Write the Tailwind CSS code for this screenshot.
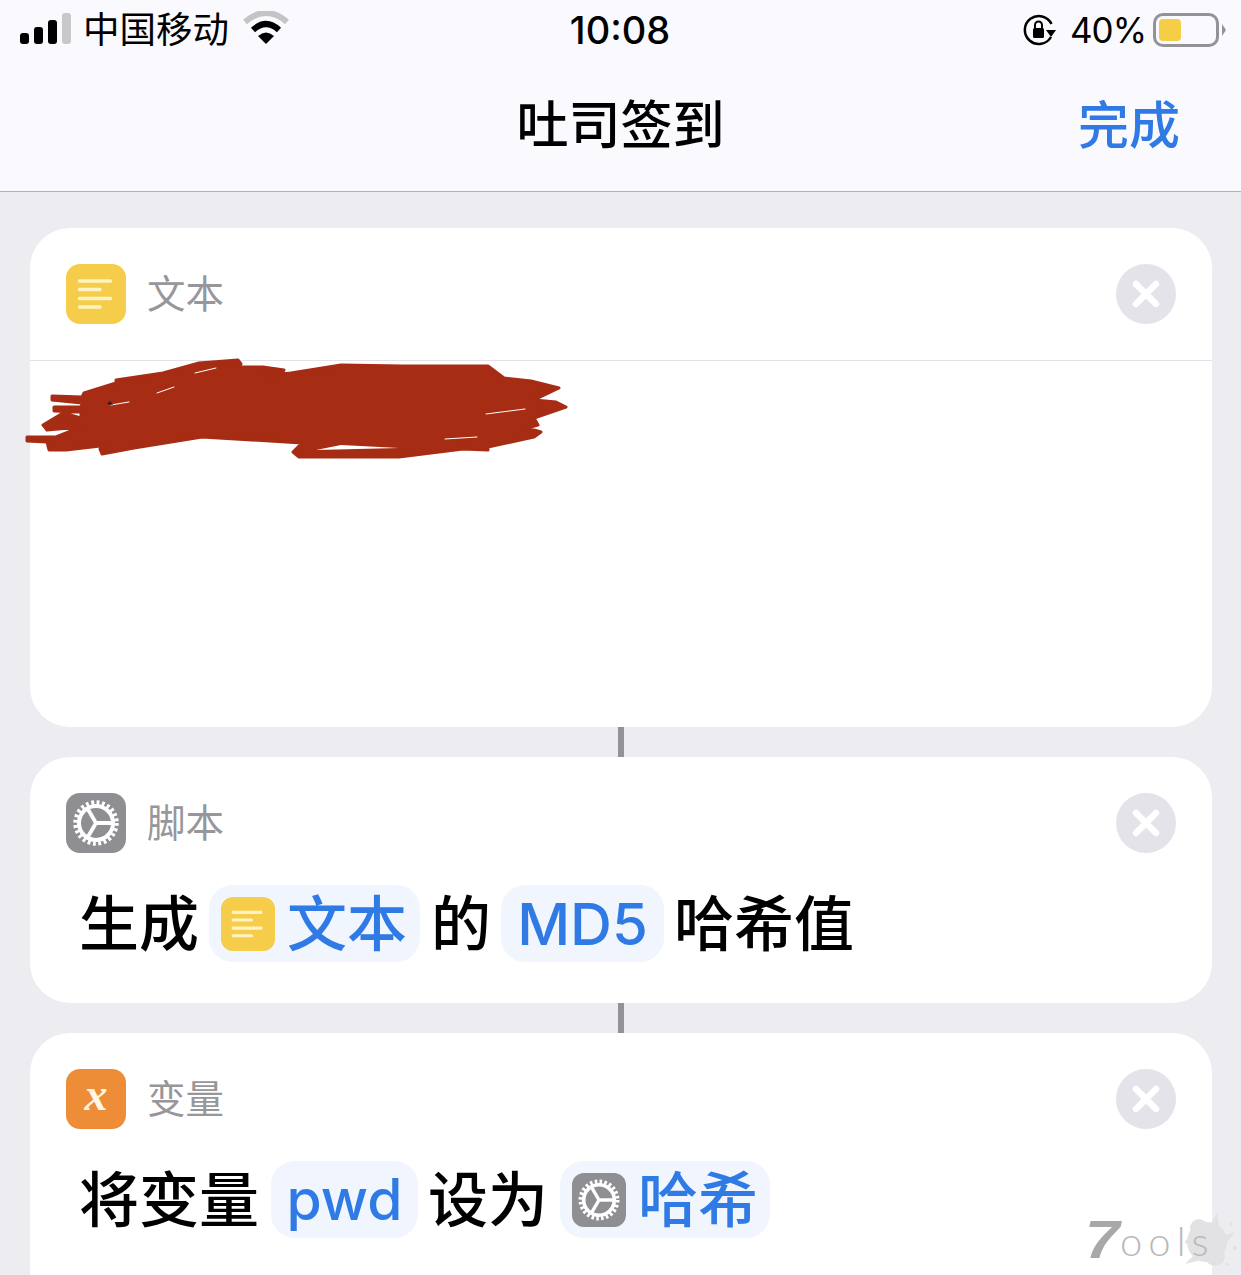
<!DOCTYPE html>
<html lang="zh-CN">
<head>
  <meta charset="UTF-8" />
  <title>吐司签到</title>
  <script src="https://cdn.jsdelivr.net/npm/@tailwindcss/browser@4"></script>
</head>
<body class="bg-[#ececf1] font-['Inter','Noto_Sans_CJK_SC',sans-serif]">
<svg class="hidden">
  <symbol id="gear" viewBox="0 0 60 60">
    <circle cx="30" cy="30" r="20.500" fill="none" stroke="#fff" stroke-width="4.500" stroke-dasharray="2.850 2.516"/>
    <circle cx="30" cy="30" r="17" fill="none" stroke="#fff" stroke-width="4"/>
    <path d="M30 30 L46 30 M30 30 L21.500 15.500 M30 30 L21.500 44.500" fill="none" stroke="#fff" stroke-width="3.800"/>
  </symbol>
  <symbol id="lines" viewBox="0 0 60 60">
    <path d="M13.500 17H44.500 M13.500 25.500H34 M13.500 34.500H44.500 M13.500 43H34" fill="none" stroke="#fff3c4" stroke-width="3.500" stroke-linecap="round"/>
  </symbol>
  <symbol id="close" viewBox="0 0 60 60">
    <circle cx="30" cy="30" r="30" fill="#e3e3e9"/>
    <path d="M20 20 L40 40 M40 20 L20 40" stroke="#fff" stroke-width="6.500" stroke-linecap="round"/>
  </symbol>
</svg>

<div class="relative h-[1275px] overflow-hidden">
  <header class="h-[192px] bg-[#fafafe] border-b border-[#b2b2b5]">
    <div class="h-[60px] flex items-center justify-between pl-[20px] pr-[15px] text-black">
      <div class="flex items-center w-[300px]">
        <svg width="51" height="32" viewBox="0 0 51 32" class="mt-[-2px]">
          <rect x="0" y="20" width="9" height="11" rx="3" fill="#000"/>
          <rect x="14" y="14" width="9" height="17" rx="3" fill="#000"/>
          <rect x="28" y="7" width="9" height="24" rx="3" fill="#000"/>
          <rect x="42" y="0" width="9" height="31" rx="3" fill="#c8c8ca"/>
        </svg>
        <span class="ml-[12px] text-[36.500px] leading-none">中国移动</span>
        <svg width="46" height="34" viewBox="0 0 46 34" class="ml-[14px] mt-[-4px]">
          <path d="M2 11 Q23 -7 44 11" fill="none" stroke="#c4c4c6" stroke-width="6"/>
          <path d="M10 19 Q23 7 36 19" fill="none" stroke="#000" stroke-width="6"/>
          <path d="M15 25 L23 33 L31 25 Q23 18 15 25Z" fill="#000"/>
        </svg>
      </div>
      <div class="text-[38px] font-medium leading-none">10:08</div>
      <div class="flex items-center justify-end w-[306px]">
        <svg width="34" height="32" viewBox="0 0 34 32">
          <path d="M28 23 A14 14 0 1 1 28.500 10" fill="none" stroke="#000" stroke-width="2.500"/>
          <path d="M23 16 H33 L28 23Z" fill="#000"/>
          <rect x="10" y="14" width="11" height="10" rx="1.500" fill="#000"/>
          <path d="M12 15 V11 A3.500 3.500 0 0 1 19 11 V15" fill="none" stroke="#000" stroke-width="2"/>
        </svg>
        <span class="ml-[13px] text-[35px] tracking-[-1px] leading-none">40%</span>
        <div class="ml-[7px] w-[66px] h-[34px] rounded-[10px] border-[3px] border-[#929297] p-[3px]">
          <div class="w-[22px] h-full rounded-[4px] bg-[#f5cd47]"></div>
        </div>
        <div class="ml-[3px] w-0 h-0 border-y-[6px] border-y-transparent border-l-[4px] border-l-[#929297]"></div>
      </div>
    </div>
    <div class="relative h-[131px] flex items-center justify-center">
      <h1 class="text-[52px] font-medium leading-none">吐司签到</h1>
      <span class="absolute right-[61px] top-[40px] text-[51px] font-medium leading-none text-[#2f7ae5]">完成</span>
    </div>
  </header>

  <main class="px-[30px] pt-[36px]">
    <section class="relative bg-white rounded-[40px] h-[499px] w-[1182px]">
      <div class="flex items-center justify-between px-[36px] h-[133px] border-b border-[#e2e2e6]">
        <div class="flex items-center">
          <div class="w-[60px] h-[60px] rounded-[14px] bg-[#f6cd4a]"><svg class="w-full h-full"><use href="#lines"/></svg></div>
          <span class="ml-[21px] text-[38.500px] leading-none text-[#97979b]">文本</span>
        </div>
        <svg class="w-[60px] h-[60px]"><use href="#close"/></svg>
      </div>
      <svg class="absolute left-[-6px] top-[128px]" width="546" height="104" viewBox="0 0 546 104" fill="#a62c14" stroke="#a62c14" stroke-linecap="round" stroke-linejoin="round">
        <path stroke-width="3" d="M92 24 L139 17 L175 7 L214 4 L217 8 L210 11 L239 11 L260 14 L258 18 L239 20 L267 17 L317 9 L378 10 L464 10 L480 22 L507 25 L535 32 L510 44 L532 46 L542 51 L510 62 L514 69 L503 72 L517 76 L510 81 L464 91 L464 94 L439 93 L375 101 L275 101 L269 96 L278 87 L178 81 L110 92 L78 98 L76 93 L85 89 L42 94 L25 94 L23 86 L3 85 L3 81 L32 81 L57 71 L23 74 L19 69 L39 57 L57 62 L57 56 L30 55 L30 51 L57 51 L58 47 L28 44 L28 40 L58 41 L60 37 L92 27 Z"/>
        <path fill="none" stroke="#fff" stroke-width="1" d="M171 17 L192 12 M133 37 L150 31 M87 49 L105 46 M462 58 L501 53 M421 83 L453 81"/>
        <path d="M292 94 L317 89 L375 92Z" fill="#fff" stroke="none"/>
        <path d="M83 48 L86 45 L89 49Z" fill="#222" stroke="none"/>
      </svg>
    </section>

    <div class="mx-auto w-[6px] h-[30px] bg-[#929297]"></div>

    <section class="bg-white rounded-[40px] h-[246px] w-[1182px] px-[36px] pt-[36px]">
      <div class="flex items-center justify-between">
        <div class="flex items-center">
          <div class="w-[60px] h-[60px] rounded-[14px] bg-[#8e8e93]"><svg class="w-full h-full"><use href="#gear"/></svg></div>
          <span class="ml-[21px] text-[38.500px] leading-none text-[#97979b]">脚本</span>
        </div>
        <svg class="w-[60px] h-[60px]"><use href="#close"/></svg>
      </div>
      <div class="mt-[32px] flex items-center gap-[10px] pl-[13px] text-[60px] font-medium leading-none">
        <span>生成</span>
        <span class="h-[77px] pl-[12px] pr-[13px] flex items-center gap-[12px] rounded-[24px] bg-[#f0f5fe] text-[#2f7ae5]">
          <span class="w-[54px] h-[54px] rounded-[12px] bg-[#f6cd4a]"><svg class="w-full h-full"><use href="#lines"/></svg></span>文本
        </span>
        <span class="ml-[1px]">的</span>
        <span class="h-[77px] w-[163px] flex items-center justify-center rounded-[24px] bg-[#f0f5fe] text-[#2f7ae5] text-[58px]">MD5</span>
        <span>哈希值</span>
      </div>
    </section>

    <div class="mx-auto w-[6px] h-[30px] bg-[#929297]"></div>

    <section class="bg-white rounded-[40px] h-[300px] w-[1182px] px-[36px] pt-[36px]">
      <div class="flex items-center justify-between">
        <div class="flex items-center">
          <div class="w-[60px] h-[60px] rounded-[14px] bg-[#ee8d37] flex items-center justify-center text-[#fff6e6] text-[46px] font-bold italic font-['Liberation_Serif',serif] leading-none pb-[8px]">x</div>
          <span class="ml-[21px] text-[38.500px] leading-none text-[#97979b]">变量</span>
        </div>
        <svg class="w-[60px] h-[60px]"><use href="#close"/></svg>
      </div>
      <div class="mt-[32px] flex items-center gap-[10px] pl-[13px] text-[60px] font-medium leading-none">
        <span>将变量</span>
        <span class="ml-[2px] h-[77px] w-[147px] flex items-center justify-center rounded-[24px] bg-[#f0f5fe] text-[#2f7ae5] text-[57px]">pwd</span>
        <span>设为</span>
        <span class="ml-[2px] h-[77px] pl-[12px] pr-[12px] flex items-center gap-[12px] rounded-[24px] bg-[#f0f5fe] text-[#2f7ae5]">
          <span class="w-[54px] h-[54px] rounded-[12px] bg-[#8e8e93]"><svg class="w-full h-full"><use href="#gear"/></svg></span>哈希
        </span>
      </div>
    </section>
  </main>

  <div class="absolute left-[1085px] top-[1218px] w-[156px] h-[57px]">
    <svg class="absolute left-[90px] top-[-6px]" width="64" height="62" viewBox="0 0 64 62" fill="#e2e2e5">
      <circle cx="32" cy="30" r="20"/>
      <circle cx="24" cy="16" r="9"/>
      <circle cx="40" cy="44" r="10"/>
      <path d="M36 12 L42 1 L44 14Z M48 24 L60 20 L50 32Z M20 42 L10 52 L26 48Z"/>
      <circle cx="56" cy="12" r="1.500"/>
      <circle cx="60" cy="36" r="2"/>
      <circle cx="12" cy="30" r="2"/>
      <circle cx="52" cy="52" r="1.500"/>
    </svg>
    <span class="absolute left-0 top-[-6px] text-[54px] leading-none font-bold italic text-[#a8a8a8] font-['Liberation_Sans',sans-serif] origin-left scale-x-[1.15]">7</span>
    <span class="absolute left-[35px] top-[3px] text-[40px] leading-none font-light tracking-[6px] text-[#b9b9b9] font-['Lato',sans-serif]">ools</span>
  </div>
</div>
</body>
</html>
